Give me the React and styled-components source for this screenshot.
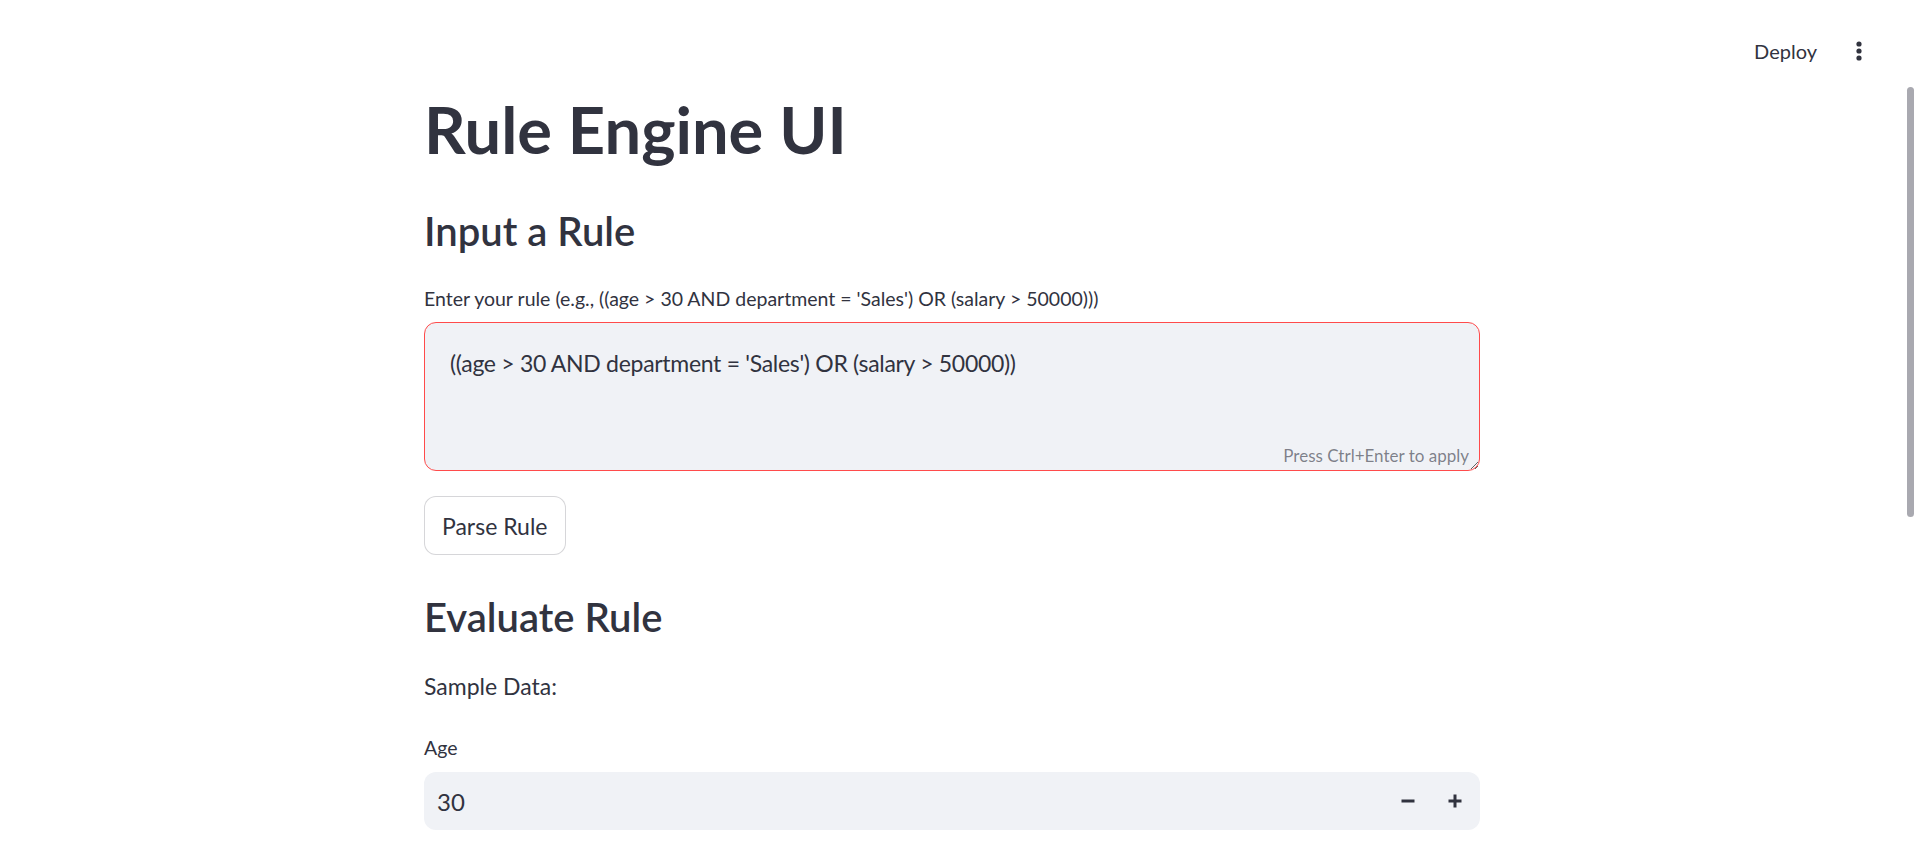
import React, { useEffect, useRef } from 'react';
import styled, { createGlobalStyle } from 'styled-components';

const GlobalStyle = createGlobalStyle`
  html, body {
    margin: 0;
    padding: 0;
    height: 100%;
    overflow: hidden;
    background: #ffffff;
  }
  body {
    font-family: 'Source Sans Pro', Lato, 'Noto Sans', sans-serif;
    color: #31333f;
  }
  * {
    box-sizing: border-box;
  }
`;

const Page = styled.div`
  position: relative;
  height: 864px;
  padding-right: 11px;
`;

const Header = styled.header`
  height: 91px;
  display: flex;
  justify-content: flex-end;
  align-items: flex-start;
  padding-top: 36px;
  padding-right: 39px;
  gap: 36px;
`;

const DeployButton = styled.button`
  border: none;
  background: transparent;
  font-family: inherit;
  font-size: 20px;
  color: #31333f;
  padding: 0;
  line-height: 30px;
  cursor: pointer;
`;

const MenuButton = styled.button`
  border: none;
  background: transparent;
  padding: 0;
  width: 12px;
  height: 30px;
  display: flex;
  align-items: center;
  justify-content: center;
  cursor: pointer;
`;

const Main = styled.main`
  width: 1056px;
  margin: 0 auto;
  display: flex;
  flex-direction: column;
  align-items: flex-start;
`;

const Title = styled.h1`
  margin: 0;
  font-size: 65px;
  line-height: 77px;
  font-weight: 700;
`;

const SubHeader = styled.h3`
  margin: ${p => p.$top}px 0 0;
  font-size: 40px;
  line-height: 46px;
  font-weight: 600;
`;

const Label = styled.label`
  display: block;
  margin-top: ${p => p.$top}px;
  font-size: 19.5px;
  line-height: 27px;
`;

const Paragraph = styled.p`
  margin: ${p => p.$top}px 0 0;
  font-size: 23px;
  line-height: 36px;
`;

const TextAreaWrap = styled.div`
  position: relative;
  width: 100%;
  margin-top: 10px;
`;

const TextArea = styled.textarea`
  display: block;
  width: 100%;
  height: 149px;
  padding: 22px 25px;
  border: 1px solid #ff4b4b;
  border-radius: 12px;
  background: #f0f2f6;
  color: #31333f;
  caret-color: #31333f;
  font-family: inherit;
  font-size: 23px;
  letter-spacing: -0.3px;
  line-height: 36px;
  outline: none;
  resize: vertical;
`;

const Hint = styled.div`
  position: absolute;
  right: 11px;
  bottom: 4px;
  font-size: 17px;
  line-height: 22px;
  color: rgba(49, 51, 63, 0.6);
  pointer-events: none;
`;

const Button = styled.button`
  margin-top: 25px;
  height: 59px;
  padding: 0 17px;
  border: 1px solid rgba(49, 51, 63, 0.2);
  border-radius: 12px;
  background: #ffffff;
  color: #31333f;
  font-family: inherit;
  font-size: 23px;
  cursor: pointer;
`;

const NumberField = styled.div`
  width: 100%;
  height: 58px;
  margin-top: 11px;
  padding-right: 2px;
  display: flex;
  align-items: center;
  background: #f0f2f6;
  border-radius: 12px;
  overflow: hidden;
`;

const NumberInput = styled.input`
  flex: 1;
  height: 100%;
  border: none;
  background: transparent;
  padding: 0 13px;
  font-family: inherit;
  font-size: 24px;
  color: #31333f;
  outline: none;
`;

const StepButton = styled.button`
  width: 47px;
  height: 100%;
  border: none;
  background: transparent;
  display: flex;
  align-items: center;
  justify-content: center;
  padding: 0;
  cursor: pointer;
`;

const ScrollThumb = styled.div`
  position: absolute;
  top: 87px;
  right: 1px;
  width: 7px;
  height: 430px;
  border-radius: 4px;
  background: #a9a9b0;
`;

const Dots = () => (
  <svg width="6" height="20" viewBox="0 0 6 20">
    <circle cx="3" cy="3" r="2.6" fill="#31333f" />
    <circle cx="3" cy="10" r="2.6" fill="#31333f" />
    <circle cx="3" cy="17" r="2.6" fill="#31333f" />
  </svg>
);

const Minus = () => (
  <svg width="14" height="14" viewBox="0 0 14 14">
    <rect x="0.5" y="5.5" width="13" height="3" fill="#31333f" />
  </svg>
);

const Plus = () => (
  <svg width="14" height="14" viewBox="0 0 14 14">
    <rect x="0.5" y="5.5" width="13" height="3" fill="#31333f" />
    <rect x="5.5" y="0.5" width="3" height="13" fill="#31333f" />
  </svg>
);

const RULE = "((age > 30 AND department = 'Sales') OR (salary > 50000))";

export default function App() {
  const ruleRef = useRef(null);

  useEffect(() => {
    const el = ruleRef.current;
    if (el) {
      el.focus();
      el.setSelectionRange(RULE.length, RULE.length);
    }
  }, []);

  return (
    <>
      <GlobalStyle />
      <Page>
        <Header>
          <DeployButton>Deploy</DeployButton>
          <MenuButton aria-label="menu">
            <Dots />
          </MenuButton>
        </Header>
        <Main>
          <Title>Rule Engine UI</Title>
          <SubHeader $top={40}>Input a Rule</SubHeader>
          <Label $top={31}>
            Enter your rule (e.g., ((age &gt; 30 AND department = 'Sales') OR (salary &gt; 50000)))
          </Label>
          <TextAreaWrap>
            <TextArea ref={ruleRef} defaultValue={RULE} spellCheck={false} />
            <Hint>Press Ctrl+Enter to apply</Hint>
          </TextAreaWrap>
          <Button>Parse Rule</Button>
          <SubHeader $top={39}>Evaluate Rule</SubHeader>
          <Paragraph $top={28}>Sample Data:</Paragraph>
          <Label $top={30}>Age</Label>
          <NumberField>
            <NumberInput type="text" defaultValue="30" />
            <StepButton aria-label="decrement">
              <Minus />
            </StepButton>
            <StepButton aria-label="increment">
              <Plus />
            </StepButton>
          </NumberField>
        </Main>
        <ScrollThumb />
      </Page>
    </>
  );
}
